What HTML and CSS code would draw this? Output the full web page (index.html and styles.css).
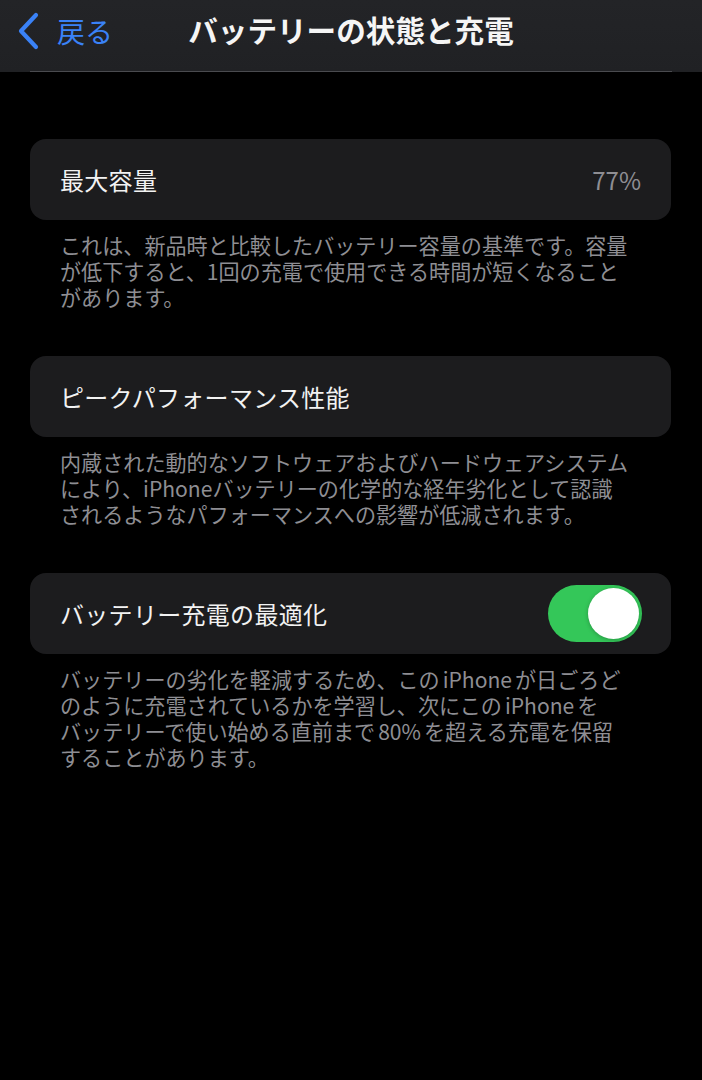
FILE: index.html
```html
<!DOCTYPE html>
<html lang="ja">
<head>
<meta charset="utf-8">
<link rel="stylesheet" href="styles.css">
</head>
<body>
<header class="nav">
  <div class="back">
    <svg class="chev" width="24" height="38" viewBox="0 0 24 38"><polyline points="20,3 5,19 20,35" fill="none" stroke="#3a82f7" stroke-width="4.2" stroke-linecap="round" stroke-linejoin="round"/></svg>
    <span class="back-text">戻る</span>
  </div>
  <div class="title">バッテリーの状態と充電</div>
  <div class="sep"></div>
</header>
<main class="content">
  <section class="group">
    <div class="card">
      <span class="label">最大容量</span>
      <span class="value">77%</span>
    </div>
    <p class="footer">これは、新品時と比較したバッテリー容量の基準です。容量<br>が低下すると、1回の充電で使用できる時間が短くなること<br>があります。</p>
  </section>
  <section class="group">
    <div class="card">
      <span class="label">ピークパフォーマンス性能</span>
    </div>
    <p class="footer">内蔵された動的なソフトウェアおよびハードウェアシステム<br>により、iPhoneバッテリーの化学的な経年劣化として認識<br>されるようなパフォーマンスへの影響が低減されます。</p>
  </section>
  <section class="group">
    <div class="card">
      <span class="label">バッテリー充電の最適化</span>
      <span class="toggle"><span class="knob"></span></span>
    </div>
    <p class="footer">バッテリーの劣化を軽減するため、この<span class="lat">iPhone</span>が日ごろど<br>のように充電されているかを学習し、次にこの<span class="lat">iPhone</span>を<br>バッテリーで使い始める直前まで<span class="lat">80%</span>を超える充電を保留<br>することがあります。</p>
  </section>
</main>
</body>
</html>
```

FILE: styles.css
```css
html, body {
  margin: 0;
  padding: 0;
  background: #000;
}
body {
  width: 702px;
  height: 1080px;
  overflow: hidden;
  font-family: "Noto Sans CJK JP", "Noto Sans", sans-serif;
  color: #fff;
}
.nav {
  position: relative;
  height: 72px;
  background: linear-gradient(#232427, #202124);
  display: flex;
  align-items: center;
  justify-content: center;
}
.back {
  position: absolute;
  left: 16px;
  top: 12px;
  height: 38px;
  display: flex;
  align-items: center;
}
.chev {
  display: block;
}
.back-text {
  margin-left: 17px;
  font-size: 28px;
  color: #3a82f7;
  line-height: 38px;
}
.title {
  font-size: 29.6px;
  font-weight: 700;
  margin-top: -13px;
  color: #f5f5f5;
}
.sep {
  position: absolute;
  left: 30px;
  right: 30px;
  bottom: 0;
  height: 1px;
  background: #4a4b4f;
}
.content {
  padding-top: 67px;
  display: flex;
  flex-direction: column;
  gap: 46px;
}
.card {
  margin: 0 31px 0 30px;
  height: 81px;
  border-radius: 16px;
  background: #1c1c1e;
  display: flex;
  align-items: center;
  justify-content: space-between;
  padding: 0 30px;
  box-sizing: border-box;
}
.label {
  font-size: 24px;
  letter-spacing: 0.3px;
  color: #f2f2f2;
}
.value {
  font-size: 24px;
  color: #8e8e93;
}
.footer {
  margin: 12px 0 0 0;
  padding: 0 30px 0 60px;
  font-size: 21.1px;
  line-height: 26px;
  color: #8e8e93;
  white-space: nowrap;
}
.lat {
  margin: 0 3px;
}
.toggle {
  width: 94px;
  height: 57px;
  border-radius: 29px;
  background: #34c759;
  margin-right: -1px;
  position: relative;
  box-sizing: border-box;
}
.knob {
  position: absolute;
  right: 3px;
  top: 3px;
  width: 51px;
  height: 51px;
  border-radius: 50%;
  background: #fff;
  box-shadow: 0 1px 4px rgba(0,0,0,0.25);
}
```
